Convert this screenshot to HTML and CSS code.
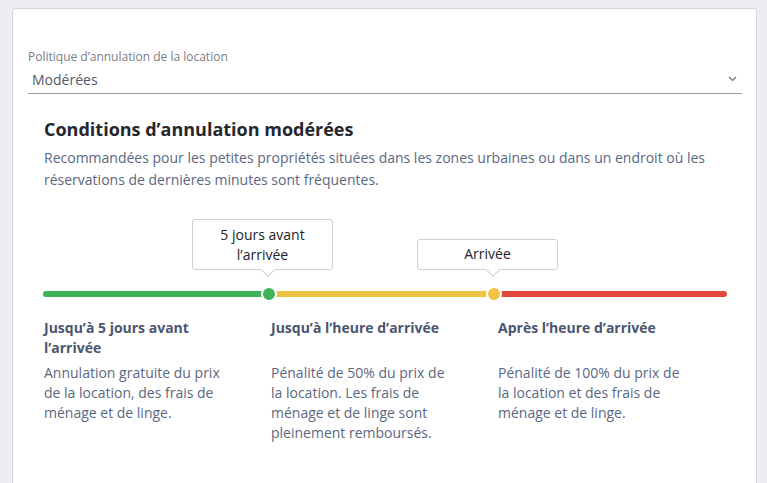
FILE: index.html
```html
<!DOCTYPE html>
<html lang="fr">
<head>
    <meta charset="UTF-8">
    <meta name="viewport" content="width=device-width, initial-scale=1.0">
    <title>Politique d'annulation</title>
    <link rel="stylesheet" href="styles.css">
</head>
<body>
    <div class="card">
        <div class="field">
            <label class="field-label">Politique d’annulation de la location</label>
            <div class="select">
                <span>Modérées</span>
                <svg class="chevron" width="9" height="6" viewBox="0 0 9 6"><polyline points="1,1 4.5,4.5 8,1" fill="none" stroke="#6b6f78" stroke-width="1.2"/></svg>
            </div>
        </div>

        <div class="policy">
            <h2>Conditions d’annulation modérées</h2>
            <p class="intro">Recommandées pour les petites propriétés situées dans les zones urbaines ou dans un endroit où les réservations de dernières minutes sont fréquentes.</p>

            <div class="timeline">
                <div class="segment green"></div>
                <div class="segment yellow"></div>
                <div class="segment red"></div>

                <div class="marker first">
                    <div class="bubble tall">5 jours avant<br>l’arrivée</div>
                    <span class="dot green"></span>
                </div>
                <div class="marker second">
                    <div class="bubble">Arrivée</div>
                    <span class="dot yellow"></span>
                </div>
            </div>

            <div class="steps">
                <h3>Jusqu’à 5 jours avant l’arrivée</h3>
                <h3>Jusqu’à l’heure d’arrivée</h3>
                <h3>Après l’heure d’arrivée</h3>
                <p>Annulation gratuite du prix de la location, des frais de ménage et de linge.</p>
                <p>Pénalité de 50% du prix de la location. Les frais de ménage et de linge sont pleinement remboursés.</p>
                <p>Pénalité de 100% du prix de la location et des frais de ménage et de linge.</p>
            </div>
        </div>
    </div>
</body>
</html>
```

FILE: styles.css
```css
body {
    margin: 0;
    padding: 8px 10px 0 12px;
    background: #eceef3;
    font-family: 'Open Sans', 'Noto Sans', sans-serif;
    height: 475px;
    overflow: hidden;
}

.card {
    background: #ffffff;
    border: 1px solid #d3d5da;
    border-radius: 3px;
    padding: 40px 14px 40px 15px;
    min-height: 520px;
    box-sizing: border-box;
}

.field-label {
    display: block;
    font-size: 12px;
    line-height: 16px;
    color: #7b7d82;
}

.select {
    display: flex;
    justify-content: space-between;
    align-items: center;
    height: 28px;
    padding: 0 5px 0 4px;
    border-bottom: 1px solid #9b9da4;
    font-size: 14px;
    color: #545a66;
}

.policy {
    padding: 0 15px 0 15px;
}

.policy h2 {
    margin: 23px 0 6px 1px;
    font-size: 18px;
    line-height: 24px;
    font-weight: 700;
    color: #25272d;
}

.intro {
    margin: 0 0 0 1px;
    font-size: 14px;
    line-height: 22px;
    color: #5b6780;
}

.timeline {
    position: relative;
    display: flex;
    margin-top: 100px;
    height: 6px;
}

.segment {
    height: 6px;
}

.segment.green {
    width: 225px;
    background: #3fb156;
    border-radius: 3px 0 0 3px;
}

.segment.yellow {
    width: 225px;
    background: #f1c343;
}

.segment.red {
    flex: 1;
    background: #e2483d;
    border-radius: 0 3px 3px 0;
}

.marker {
    position: absolute;
    top: 3px;
    width: 0;
}

.marker.first {
    left: 226px;
}

.marker.second {
    left: 451px;
}

.dot {
    position: absolute;
    left: -8px;
    top: -8px;
    width: 12px;
    height: 12px;
    border-radius: 50%;
    border: 2px solid #ffffff;
}

.dot.green {
    background: #3fb156;
}

.dot.yellow {
    background: #f1c343;
}

.bubble {
    position: absolute;
    left: -77px;
    bottom: 24px;
    width: 139px;
    padding: 5px 0 6px;
    background: #ffffff;
    border: 1px solid #cfd1d6;
    border-radius: 3px;
    text-align: center;
    font-size: 14px;
    line-height: 18px;
    color: #222328;
}

.bubble.tall {
    padding: 5px 0 4px;
    line-height: 20px;
}

.bubble::after {
    content: '';
    position: absolute;
    left: 70px;
    bottom: -6px;
    width: 9px;
    height: 9px;
    background: #ffffff;
    border-right: 1px solid #cfd1d6;
    border-bottom: 1px solid #cfd1d6;
    transform: rotate(45deg);
}

.steps {
    display: grid;
    grid-template-columns: repeat(3, 227px);
    row-gap: 5px;
    margin-top: 21px;
    margin-left: 1px;
}

.steps h3 {
    margin: 0;
    max-width: 185px;
    font-size: 14px;
    line-height: 20px;
    font-weight: 700;
    color: #4b5570;
}

.steps p {
    margin: 0;
    max-width: 185px;
    font-size: 14px;
    line-height: 20px;
    color: #5b6780;
}
```
